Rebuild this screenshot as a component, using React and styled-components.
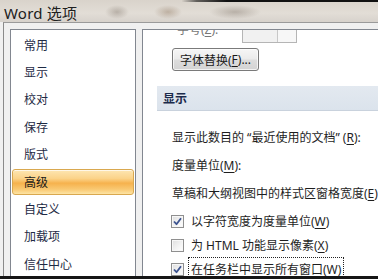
import React from "react";
import styled, { createGlobalStyle } from "styled-components";

const Global = createGlobalStyle`
  html, body { margin: 0; padding: 0; background: #f0f0f0; }
  #root { width: 378px; height: 279px; overflow: hidden; }
  * { box-sizing: border-box; }
`;

const FONT = `"Noto Sans", "Noto Sans CJK SC", sans-serif`;

const Window = styled.div`
  width: 378px;
  height: 279px;
  display: flex;
  flex-direction: column;
  overflow: hidden;
  font-family: ${FONT};
  border-bottom: 3px solid #151515;
  background: #f0f0f0;
`;

const TitleBar = styled.div`
  height: 22px;
  flex: none;
  display: flex;
  align-items: center;
  padding-left: 4px;
  background:
    linear-gradient(90deg, transparent 0 48%, rgba(0,0,0,0.55) 52%, #111 60%, #111 100%) top / 100% 2px no-repeat,
    radial-gradient(ellipse 12px 7px at 117px 12px, rgba(150,140,130,0.55), transparent),
    radial-gradient(ellipse 14px 7px at 168px 12px, rgba(160,140,120,0.55), transparent),
    radial-gradient(ellipse 26px 7px at 235px 12px, rgba(150,140,130,0.55), transparent),
    linear-gradient(180deg, #d9d3cb 0%, #e2ddd6 60%, #d7d2cc 100%);
`;

const TitleText = styled.span`
  font-size: 15px;
  color: #202020;
  letter-spacing: 0.2px;
  margin-top: 2px;
`;

const Body = styled.div`
  flex: 1;
  min-height: 0;
  display: flex;
  gap: 6px;
  margin-left: 3px;
  padding: 6px 0 0 6px;
  border-top: 1px solid #9a9a9a;
  border-left: 1px solid #8a8a8a;
  background: #f0f0f0;
  overflow: hidden;
`;

const Nav = styled.div`
  width: 126px;
  flex: none;
  background: #fff;
  border: 1px solid #828790;
  border-bottom: none;
  padding: 1px 0 0 0;
  display: flex;
  flex-direction: column;
`;

const NavItem = styled.div`
  height: 27.4px;
  flex: none;
  display: flex;
  align-items: center;
  padding-left: ${p => (p.$active ? "11px" : "13px")};
  margin: ${p => (p.$active ? "0.7px 1px" : "0")};
  ${p => p.$active && `height: 26px;`}
  font-size: 12px;
  color: #1e2a44;
  border-radius: 3px;
  ${p =>
    p.$active &&
    `
    background: linear-gradient(180deg, #fde6b2 0%, #fbd38a 35%, #f6b24d 55%, #f9c872 80%, #fde4a4 100%);
    border: 1px solid #d9a84f;
    box-shadow: inset 0 1px 0 rgba(255,255,255,0.7);
    color: #1a1a1a;
  `}
`;

const Content = styled.div`
  flex: 1;
  min-width: 0;
  background: #fff;
  border-left: 1px solid #828790;
  border-top: 1px solid #828790;
  display: flex;
  flex-direction: column;
  padding-left: 14px;
  overflow: hidden;
  font-size: 12px;
  color: #1e1e1e;
`;

const ClippedRow = styled.div`
  height: 13px;
  flex: none;
  display: flex;
  align-items: flex-start;
  overflow: hidden;
  padding-left: 20px;
  gap: 10px;
`;

const FadedLabel = styled.span`
  color: #777;
  font-size: 12px;
  line-height: 12px;
  margin-top: -6px;
`;

const Combo = styled.div`
  width: 55px;
  height: 13px;
  flex: none;
  display: flex;
  border: 1px solid #b5b5b5;
  border-top: none;
  background: #f1f1f1;
  margin-left: 14px;
`;

const ComboDrop = styled.div`
  margin-left: auto;
  width: 19px;
  border-left: 1px solid #c8c8c8;
  background: #f7f7f7;
`;

const ButtonRow = styled.div`
  padding: 5px 0 0 15px;
  flex: none;
`;

const Button = styled.div`
  width: 87px;
  height: 23px;
  display: flex;
  align-items: center;
  justify-content: center;
  border: 1px solid #7a7a7a;
  border-radius: 3px;
  background: linear-gradient(180deg, #f6f6f6 0%, #ebebeb 48%, #dddddd 52%, #d3d3d3 100%);
  box-shadow: inset 0 0 0 1px rgba(255,255,255,0.7);
  font-size: 12px;
  color: #1a1a1a;
  white-space: nowrap;
`;

const U = styled.span`
  text-decoration: underline;
  text-underline-offset: 2px;
`;

const SectionHeader = styled.div`
  margin-top: 15px;
  height: 25px;
  flex: none;
  display: flex;
  align-items: center;
  padding-left: 6px;
  background: linear-gradient(180deg, #e3e9f0 0%, #dbe3ec 100%);
  border-bottom: 1px solid #c9d2dd;
  font-size: 12px;
  font-weight: 700;
  color: #1b2b4b;
`;

const Options = styled.div`
  display: flex;
  flex-direction: column;
  padding: 12px 0 0 15px;
`;

const TextRow = styled.div`
  height: 28px;
  flex: none;
  display: flex;
  align-items: center;
  white-space: nowrap;
`;

const CheckGroup = styled.div`
  display: flex;
  flex-direction: column;
  padding-top: 2px;
`;

const CheckRow = styled.div`
  height: 24px;
  flex: none;
  display: flex;
  align-items: center;
  gap: 6px;
  white-space: nowrap;
  margin-left: -1px;
`;

const Box = styled.div`
  width: 13px;
  height: 13px;
  flex: none;
  border: 1px solid #8f8f8f;
  background: linear-gradient(135deg, #dedede 0%, #f4f4f4 60%, #ffffff 100%);
  box-shadow: inset 0 0 0 1px #f7f7f7;
  display: flex;
  align-items: center;
  justify-content: center;
`;

const Label = styled.span`
  padding: 2px 2px;
  border: 1px dotted ${p => (p.$focus ? "#222" : "transparent")};
  margin-left: -2px;
`;

const Check = () => (
  <svg width="9" height="9" viewBox="0 0 9 9">
    <path d="M1 4.5 L3.5 7.2 L8 1.2" fill="none" stroke="#3d5490" strokeWidth="1.8" strokeLinejoin="round" />
  </svg>
);

const CheckOption = ({ checked, focus, children }) => (
  <CheckRow>
    <Box>{checked && <Check />}</Box>
    <Label $focus={focus}>{children}</Label>
  </CheckRow>
);

const navItems = ["常用", "显示", "校对", "保存", "版式", "高级", "自定义", "加载项", "信任中心"];

export default function App() {
  return (
    <>
      <Global />
      <Window>
        <TitleBar>
          <TitleText>Word 选项</TitleText>
        </TitleBar>
        <Body>
          <Nav>
            {navItems.map(n => (
              <NavItem key={n} $active={n === "高级"}>{n}</NavItem>
            ))}
          </Nav>
          <Content>
            <ClippedRow>
              <FadedLabel>字号(<U>Z</U>):</FadedLabel>
              <Combo><ComboDrop /></Combo>
            </ClippedRow>
            <ButtonRow>
              <Button>字体替换(<U>F</U>)...</Button>
            </ButtonRow>
            <SectionHeader>显示</SectionHeader>
            <Options>
              <TextRow>显示此数目的 “最近使用的文档” (<U>R</U>):</TextRow>
              <TextRow>度量单位(<U>M</U>):</TextRow>
              <TextRow>草稿和大纲视图中的样式区窗格宽度(<U>E</U>):</TextRow>
              <CheckGroup>
                <CheckOption checked>以字符宽度为度量单位(<U>W</U>)</CheckOption>
                <CheckOption>为 HTML 功能显示像素(<U>X</U>)</CheckOption>
                <CheckOption checked focus>在任务栏中显示所有窗口(<U>W</U>)</CheckOption>
              </CheckGroup>
            </Options>
          </Content>
        </Body>
      </Window>
    </>
  );
}
